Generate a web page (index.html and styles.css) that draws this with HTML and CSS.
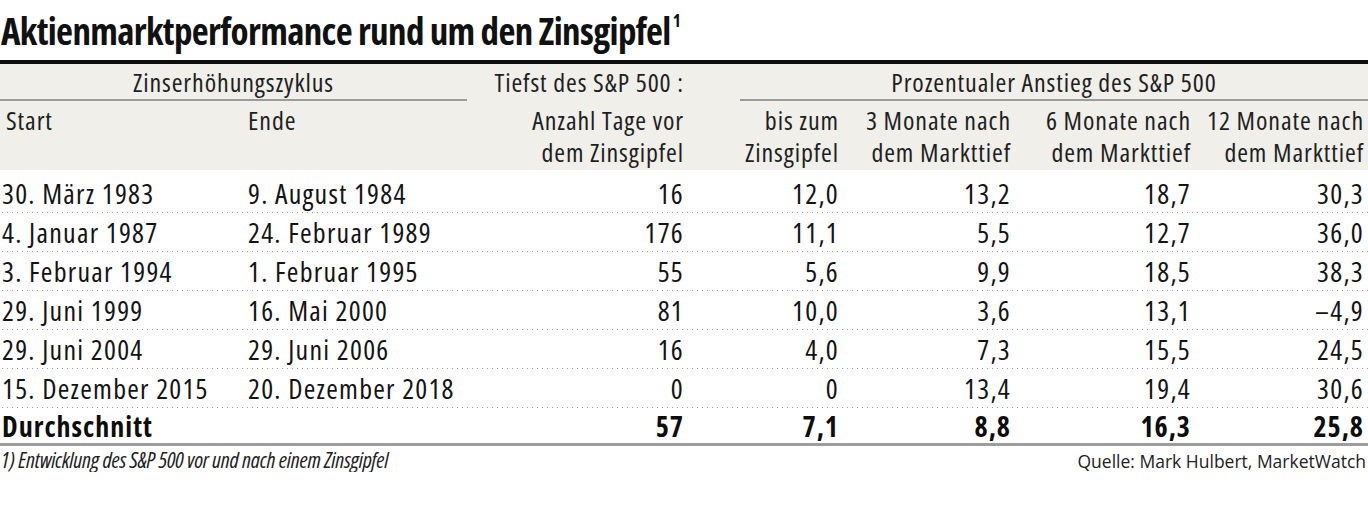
FILE: index.html
```html
<!DOCTYPE html>
<html lang="de">
<head>
<meta charset="utf-8">
<title>Aktienmarktperformance rund um den Zinsgipfel</title>
<link rel="stylesheet" href="styles.css">
</head>
<body>
<h1 class="title">Aktienmarktperformance rund um den Zinsgipfel<sup class="fn-mark">1</sup></h1>
<div class="table">
  <div class="head">
    <div class="row group-row">
      <div class="group group-a"><span>Zinserhöhungszyklus</span></div>
      <div class="cell num">Tiefst des S&amp;P 500 :</div>
      <div class="group group-b"><span>Prozentualer Anstieg des S&amp;P 500</span></div>
    </div>
    <div class="row sub-row">
      <div class="cell first"><span class="ln">Start</span></div>
      <div class="cell"><span class="ln">Ende</span></div>
      <div class="cell num"><span class="ln">Anzahl Tage vor</span><span class="ln">dem Zinsgipfel</span></div>
      <div class="cell num"><span class="ln">bis zum</span><span class="ln">Zinsgipfel</span></div>
      <div class="cell num"><span class="ln">3 Monate nach</span><span class="ln">dem Markttief</span></div>
      <div class="cell num"><span class="ln">6 Monate nach</span><span class="ln">dem Markttief</span></div>
      <div class="cell num"><span class="ln">12 Monate nach</span><span class="ln">dem Markttief</span></div>
    </div>
  </div>
  <div class="body">
    <div class="row data">
      <div class="cell first">30. März 1983</div><div class="cell">9. August 1984</div>
      <div class="cell num">16</div><div class="cell num">12,0</div><div class="cell num">13,2</div><div class="cell num">18,7</div><div class="cell num">30,3</div>
    </div>
    <div class="row data">
      <div class="cell first">4. Januar 1987</div><div class="cell">24. Februar 1989</div>
      <div class="cell num">176</div><div class="cell num">11,1</div><div class="cell num">5,5</div><div class="cell num">12,7</div><div class="cell num">36,0</div>
    </div>
    <div class="row data">
      <div class="cell first">3. Februar 1994</div><div class="cell">1. Februar 1995</div>
      <div class="cell num">55</div><div class="cell num">5,6</div><div class="cell num">9,9</div><div class="cell num">18,5</div><div class="cell num">38,3</div>
    </div>
    <div class="row data">
      <div class="cell first">29. Juni 1999</div><div class="cell">16. Mai 2000</div>
      <div class="cell num">81</div><div class="cell num">10,0</div><div class="cell num">3,6</div><div class="cell num">13,1</div><div class="cell num">–4,9</div>
    </div>
    <div class="row data">
      <div class="cell first">29. Juni 2004</div><div class="cell">29. Juni 2006</div>
      <div class="cell num">16</div><div class="cell num">4,0</div><div class="cell num">7,3</div><div class="cell num">15,5</div><div class="cell num">24,5</div>
    </div>
    <div class="row data">
      <div class="cell first">15. Dezember 2015</div><div class="cell">20. Dezember 2018</div>
      <div class="cell num">0</div><div class="cell num">0</div><div class="cell num">13,4</div><div class="cell num">19,4</div><div class="cell num">30,6</div>
    </div>
    <div class="row total">
      <div class="cell first">Durchschnitt</div><div class="cell"></div>
      <div class="cell num">57</div><div class="cell num">7,1</div><div class="cell num">8,8</div><div class="cell num">16,3</div><div class="cell num">25,8</div>
    </div>
  </div>
</div>
<div class="foot">
  <span class="note">1) Entwicklung des S&amp;P 500 vor und nach einem Zinsgipfel</span>
  <span class="source">Quelle: Mark Hulbert, MarketWatch</span>
</div>
</body>
</html>
```
FILE: styles.css
```css
html, body {
  margin: 0;
  padding: 0;
  background: #ffffff;
}
body {
  width: 1368px;
  font-family: "Open Sans", "Liberation Sans", sans-serif;
  color: #151515;
}
.title {
  margin: 0;
  padding: 9px 0 0 1px;
  height: 44px;
  font-size: 37px;
  line-height: 44px;
  font-weight: 700;
  font-stretch: 75%;
  letter-spacing: -0.65px;
  color: #111;
  white-space: nowrap;
}
.fn-mark {
  font-size: 17px;
  vertical-align: top;
  line-height: 20px;
  position: relative;
  top: 2px;
  margin-left: 2px;
  letter-spacing: 0;
}
.table {
  margin-top: 7px;
  border-top: 4px solid #0d0d0d;
}
.row {
  display: grid;
  grid-template-columns: 248px 222px 218px 155px 172px 180px 173px;
}
.cell {
  padding-right: 4px;
  font-size: 28px;
  font-stretch: 75%;
  letter-spacing: 1.25px;
  white-space: nowrap;
}
.cell.first {
  padding-left: 2px;
}
.num {
  text-align: right;
}
.head {
  background: #f0efea;
  color: #1f1f1f;
}
.group-row {
  height: 37px;
  align-items: start;
}
.group-row .cell,
.group span {
  font-size: 26px;
  font-stretch: 75%;
  letter-spacing: 0.9px;
  line-height: 37px;
}
.group {
  text-align: center;
  height: 35px;
  border-bottom: 2px solid #9b9b9b;
}
.group-a {
  grid-column: 1 / span 2;
  margin-right: 3px;
}
.group-b {
  grid-column: 4 / span 4;
  margin-left: 52px;
}
.group-row > .cell {
  grid-column: 3;
}
.sub-row {
  padding-top: 3px;
  height: 66px;
}
.sub-row .cell {
  display: flex;
  flex-direction: column;
  font-size: 26px;
  font-stretch: 75%;
  letter-spacing: 0.9px;
  line-height: 32px;
}
.sub-row .cell.num {
  align-items: flex-end;
}
.ln {
  display: block;
  height: 32px;
}
.sub-row .cell.first {
  padding-left: 6px;
}
.body {
  padding-top: 4px;
}
.data {
  height: 39px;
  background-image: linear-gradient(to right, #9a9a9a 0, #9a9a9a 1px, transparent 1px);
  background-size: 5px 1px;
  background-repeat: repeat-x;
  background-position: 2px bottom;
}
.data .cell {
  line-height: 38px;
  color: #141414;
}
.total {
  padding-top: 2px;
  box-sizing: border-box;
  border-bottom: 3px solid #9d9d9d;
  height: 38px;
}
.total .cell {
  font-weight: 700;
  font-stretch: 75%;
  letter-spacing: 1px;
  line-height: 33px;
  color: #0d0d0d;
}
.foot {
  display: flex;
  justify-content: space-between;
  align-items: baseline;
  padding: 2px 2px 0 1px;
  color: #222;
}
.note {
  font-size: 22px;
  font-style: italic;
  font-stretch: 75%;
  letter-spacing: -0.2px;
  line-height: 22px;
}
.source {
  font-size: 17.5px;
  font-stretch: 100%;
  letter-spacing: 0;
  line-height: 22px;
}
```
